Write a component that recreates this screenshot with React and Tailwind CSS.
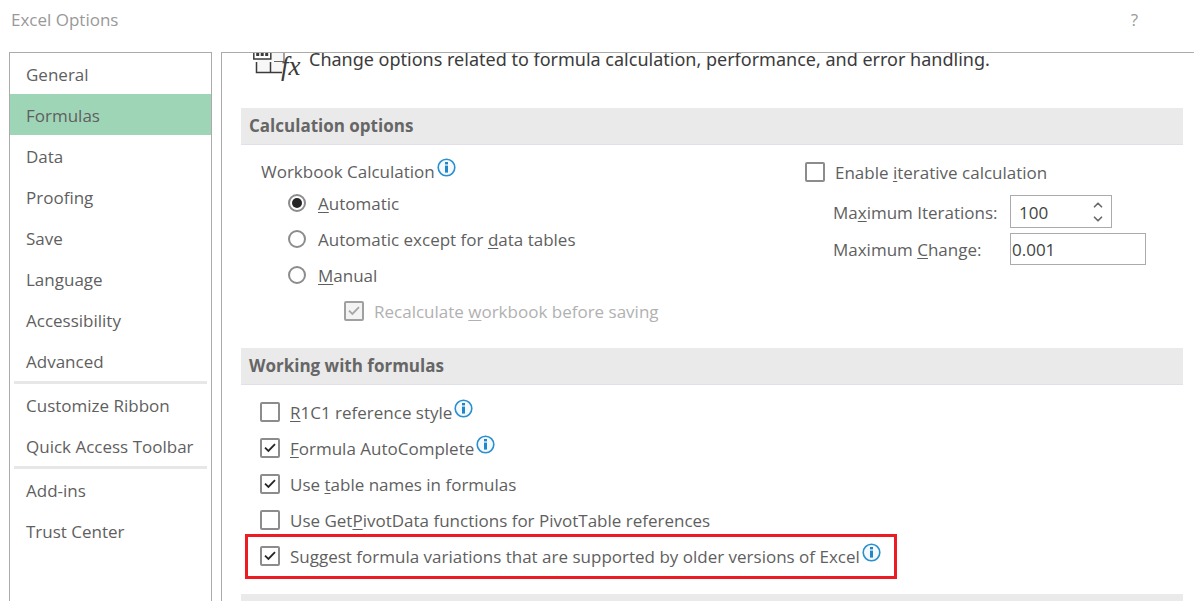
import React, { useState } from "react";
import { ChevronDown, ChevronUp } from "lucide-react";

const NAV_GROUPS = [
  [
    "General",
    "Formulas",
    "Data",
    "Proofing",
    "Save",
    "Language",
    "Accessibility",
    "Advanced",
  ],
  ["Customize Ribbon", "Quick Access Toolbar"],
  ["Add-ins", "Trust Center"],
];

// Underlines the access key, e.g. "Use _table names"
function KeyLabel({ text }) {
  const [before, rest] = text.split("_");
  if (!rest) return <span className="pt-0.5 whitespace-nowrap">{text}</span>;
  return (
    <span className="pt-0.5 whitespace-nowrap">
      {before}
      <span className="underline decoration-1 underline-offset-2 [text-decoration-skip-ink:none]">
        {rest[0]}
      </span>
      {rest.slice(1)}
    </span>
  );
}

function InfoButton({ label }) {
  return (
    <button type="button" aria-label={label} className="mb-2 ml-0.5 shrink-0">
      <svg width="19" height="19" viewBox="0 0 19 19" fill="none">
        <circle
          cx="9.5"
          cy="9.5"
          r="8.3"
          fill="#f4f9fd"
          stroke="#2b8fce"
          strokeWidth="1.6"
        />
        <rect x="8" y="4" width="3" height="2.4" fill="#1f86c8" />
        <rect x="8" y="7.6" width="3" height="7" fill="#1f86c8" />
      </svg>
    </button>
  );
}

function Checkbox({ text, checked, onChange, disabled = false }) {
  return (
    <label
      className={`flex items-center gap-2.5 ${disabled ? "text-[#b1b1b1]" : ""}`}
    >
      <span className="relative flex shrink-0">
        <input
          type="checkbox"
          checked={checked}
          onChange={(e) => onChange && onChange(e.target.checked)}
          disabled={disabled}
          className="w-5 h-5 bg-white rounded-xs border-2 appearance-none border-[#8c8c8c] disabled:bg-[#f3f3f3] disabled:border-[#a0a0a0]"
        />
        {checked && (
          <svg
            className="absolute inset-0 pointer-events-none"
            width="20"
            height="20"
            viewBox="0 0 20 20"
            fill="none"
          >
            <path
              d="M5 9.7 L8.4 12.9 L15 6.1"
              stroke={disabled ? "#a6a6a6" : "#262626"}
              strokeWidth="1.8"
            />
          </svg>
        )}
      </span>
      <KeyLabel text={text} />
    </label>
  );
}

function Radio({ text, checked, onChange }) {
  return (
    <label className="flex gap-3 items-center h-9">
      <span className="relative flex shrink-0">
        <input
          type="radio"
          name="calculation"
          checked={checked}
          onChange={onChange}
          className="bg-white rounded-full border-2 appearance-none w-[18px] h-[18px] border-[#8c8c8c]"
        />
        {checked && (
          <span className="absolute inset-1 bg-[#262626] rounded-full pointer-events-none"></span>
        )}
      </span>
      <KeyLabel text={text} />
    </label>
  );
}

function SectionTitle({ children }) {
  return (
    <h2 className="flex items-center px-2 font-bold border-b h-[37px] shrink-0 bg-[#eaeaea] border-[#dfe1e6] text-[#666666]">
      {children}
    </h2>
  );
}

function FormulaIcon() {
  return (
    <svg
      className="shrink-0"
      width="50"
      height="42"
      viewBox="0 0 50 42"
      fill="none"
    >
      <rect x="4" y="10" width="27" height="21" fill="#f7f7f7" />
      <path
        d="M3.5 21 V31.5 H29 M17.5 21 V31"
        stroke="#3b3b3b"
        strokeWidth="1.5"
      />
      <path d="M21 20.5 H31 V9" stroke="#666666" strokeWidth="1.2" />
      <rect
        x="0.8"
        y="1"
        width="17"
        height="17"
        fill="#ffffff"
        stroke="#3b3b3b"
        strokeWidth="1.5"
      />
      <path
        d="M3.2 13.5 H15.5"
        stroke="#3b3b3b"
        strokeWidth="3"
        strokeDasharray="3 1.5"
      />
      <text
        x="28"
        y="34"
        fill="#3b3b3b"
        fontFamily="Liberation Serif, serif"
        fontStyle="italic"
        fontSize="27"
      >
        fx
      </text>
    </svg>
  );
}

function Sidebar({ active, onSelect }) {
  return (
    <nav className="overflow-hidden border border-b-0 w-[203px] shrink-0 border-[#ababab]">
      {NAV_GROUPS.map((group, i) => (
        <div key={group[0]}>
          {i > 0 && <hr className="mx-1 border-t-3 border-[#e7e7e8]" />}
          {group.map((item) => (
            <button
              key={item}
              type="button"
              onClick={() => onSelect(item)}
              className={`flex items-center w-full px-4 pt-0.5 h-[41px] whitespace-nowrap ${
                active === item ? "bg-[#9fd5b7]" : ""
              }`}
            >
              {item}
            </button>
          ))}
        </div>
      ))}
    </nav>
  );
}

function CalculationOptions() {
  const [mode, setMode] = useState("auto");
  const [iterative, setIterative] = useState(false);
  const [iterations, setIterations] = useState(100);
  const [maxChange, setMaxChange] = useState("0.001");

  return (
    <div className="grid pt-3 pb-[19px] pl-5 grid-cols-[59%_41%]">
      <div>
        <div className="flex items-center h-7">
          <KeyLabel text="Workbook Calculation" />
          <InfoButton label="About workbook calculation" />
        </div>
        <div className="pl-[27px]">
          <Radio
            text="_Automatic"
            checked={mode === "auto"}
            onChange={() => setMode("auto")}
          />
          <Radio
            text="Automatic except for _data tables"
            checked={mode === "tables"}
            onChange={() => setMode("tables")}
          />
          <Radio
            text="_Manual"
            checked={mode === "manual"}
            onChange={() => setMode("manual")}
          />
          <div className="flex items-center pl-14 h-9">
            <Checkbox
              text="Recalculate _workbook before saving"
              checked
              disabled
            />
          </div>
        </div>
      </div>

      <div>
        <div className="flex items-center h-[30px]">
          <Checkbox
            text="Enable _iterative calculation"
            checked={iterative}
            onChange={setIterative}
          />
        </div>
        <div className="grid gap-y-[5px] items-center pt-2 pl-7 grid-cols-[177px_1fr]">
          <label htmlFor="iterations" className="flex">
            <KeyLabel text="Ma_ximum Iterations:" />
          </label>
          <div className="flex border w-[102px] h-[33px] border-[#ababab]">
            <input
              id="iterations"
              type="text"
              value={iterations}
              onChange={(e) => setIterations(Number(e.target.value) || 0)}
              className="flex-1 pt-0.5 pl-2 w-0 outline-none text-[#444444]"
            />
            <div className="flex flex-col justify-center w-5 text-[#6a6a6a]">
              <button
                type="button"
                aria-label="Increase"
                onClick={() => setIterations(iterations + 1)}
              >
                <ChevronUp size={14} strokeWidth={3} />
              </button>
              <button
                type="button"
                aria-label="Decrease"
                onClick={() => setIterations(Math.max(1, iterations - 1))}
              >
                <ChevronDown size={14} strokeWidth={3} />
              </button>
            </div>
          </div>
          <label htmlFor="max-change" className="flex">
            <KeyLabel text="Maximum _Change:" />
          </label>
          <input
            id="max-change"
            type="text"
            value={maxChange}
            onChange={(e) => setMaxChange(e.target.value)}
            className="px-px border outline-none w-[136px] h-8 border-[#ababab] text-[#444444]"
          />
        </div>
      </div>
    </div>
  );
}

function WorkingWithFormulas() {
  const [options, setOptions] = useState([
    { text: "_R1C1 reference style", checked: false, info: true },
    { text: "_Formula AutoComplete", checked: true, info: true },
    { text: "Use _table names in formulas", checked: true },
    {
      text: "Use Get_PivotData functions for PivotTable references",
      checked: false,
    },
    {
      text: "Suggest formula variations that are supported by older versions of Excel",
      checked: true,
      info: true,
      highlight: true,
    },
  ]);

  const handleChange = (index, checked) => {
    setOptions(options.map((o, i) => (i === index ? { ...o, checked } : o)));
  };

  return (
    <div className="pt-[9px] pb-5 pl-[19px]">
      {options.map((option, i) => (
        <div key={option.text} className="flex relative items-center w-fit h-9">
          <Checkbox
            text={option.text}
            checked={option.checked}
            onChange={(checked) => handleChange(i, checked)}
          />
          {option.info && <InfoButton label="More information" />}
          {option.highlight && (
            <div className="absolute -top-1 -bottom-[5px] -left-[15px] -right-4 border-3 pointer-events-none border-[#ed1c24]"></div>
          )}
        </div>
      ))}
    </div>
  );
}

function App() {
  const [active, setActive] = useState("Formulas");

  return (
    <div className="flex overflow-hidden flex-col h-screen bg-white text-[17px] leading-6 text-[#5f5f5f] font-['Open_Sans','Noto_Sans',sans-serif]">
      <header className="flex justify-between items-center pb-3 pl-[11px] pr-14 h-[52px] shrink-0 text-[#999999]">
        <h1>Excel Options</h1>
        <button type="button" aria-label="Help">
          ?
        </button>
      </header>

      <div className="flex flex-1 pl-[9px] gap-[9px] min-h-0">
        <Sidebar active={active} onSelect={setActive} />

        <main className="flex overflow-hidden flex-col flex-1 pl-[19px] pr-[11px] border-t border-l border-[#ababab]">
          {/* Scrolled down a little, so the top of the banner is cut off */}
          <div className="flex gap-1.5 items-end pb-[25px] pl-3 h-[55px] shrink-0 text-lg leading-6 text-[#3b3b3b]">
            <FormulaIcon />
            <p className="mb-3 whitespace-nowrap font-['Noto_Sans',sans-serif]">
              Change options related to formula calculation, performance, and
              error handling.
            </p>
          </div>

          <SectionTitle>Calculation options</SectionTitle>
          <CalculationOptions />

          <SectionTitle>Working with formulas</SectionTitle>
          <WorkingWithFormulas />

          <SectionTitle />
        </main>
      </div>
    </div>
  );
}

export default App;
